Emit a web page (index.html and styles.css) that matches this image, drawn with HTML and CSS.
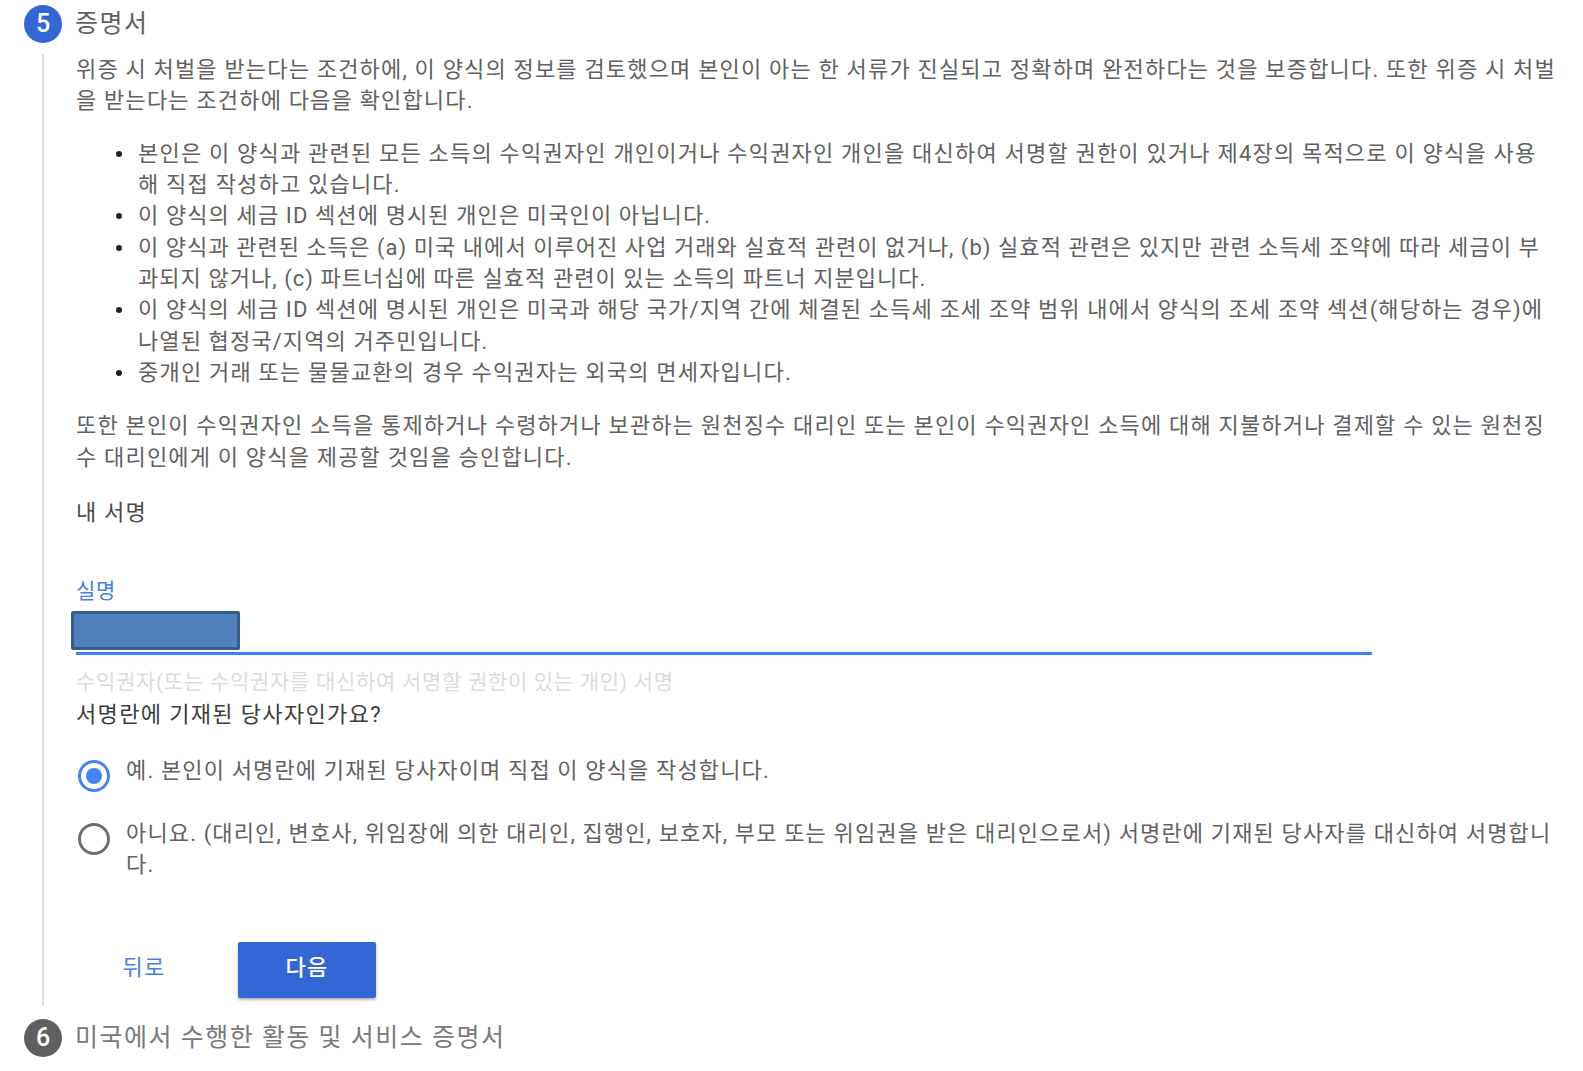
FILE: index.html
```html
<!DOCTYPE html>
<html lang="ko">
<head>
<meta charset="utf-8">
<title>증명서</title>
<link rel="stylesheet" href="styles.css">
</head>
<body>
<main class="stepper">
  <header class="step-head">
    <span class="badge badge-active">5</span>
    <h2 class="step-title">증명서</h2>
  </header>
  <section class="step-body">
    <p class="para para-first">위증 시 처벌을 받는다는 조건하에, 이 양식의 정보를 검토했으며 본인이 아는 한 서류가 진실되고 정확하며 완전하다는 것을 보증합니다. 또한 위증 시 처벌을 받는다는 조건하에 다음을 확인합니다.</p>
    <ul class="list">
      <li class="item-wide">본인은 이 양식과 관련된 모든 소득의 수익권자인 개인이거나 수익권자인 개인을 대신하여 서명할 권한이 있거나 제4장의 목적으로 이 양식을 사용해 직접 작성하고 있습니다.</li>
      <li class="item-mid">이 양식의 세금 ID 섹션에 명시된 개인은 미국인이 아닙니다.</li>
      <li class="item-tight">이 양식과 관련된 소득은 (a) 미국 내에서 이루어진 사업 거래와 실효적 관련이 없거나, (b) 실효적 관련은 있지만 관련 소득세 조약에 따라 세금이 부과되지 않거나, (c) 파트너십에 따른 실효적 관련이 있는 소득의 파트너 지분입니다.</li>
      <li class="item-mid">이 양식의 세금 ID 섹션에 명시된 개인은 미국과 해당 국가/지역 간에 체결된 소득세 조세 조약 범위 내에서 양식의 조세 조약 섹션(해당하는 경우)에 나열된 협정국/지역의 거주민입니다.</li>
      <li class="item-wide">중개인 거래 또는 물물교환의 경우 수익권자는 외국의 면세자입니다.</li>
    </ul>
    <p class="para">또한 본인이 수익권자인 소득을 통제하거나 수령하거나 보관하는 원천징수 대리인 또는 본인이 수익권자인 소득에 대해 지불하거나 결제할 수 있는 원천징수 대리인에게 이 양식을 제공할 것임을 승인합니다.</p>
    <p class="para sign-label">내 서명</p>
    <div class="field">
      <label class="field-label">실명</label>
      <div class="field-input"><span class="redact"></span></div>
      <p class="field-hint">수익권자(또는 수익권자를 대신하여 서명할 권한이 있는 개인) 서명</p>
    </div>
    <p class="para question">서명란에 기재된 당사자인가요?</p>
    <div class="radio-row radio-first">
      <span class="radio radio-on"><span class="radio-dot"></span></span>
      <span class="radio-text">예. 본인이 서명란에 기재된 당사자이며 직접 이 양식을 작성합니다.</span>
    </div>
    <div class="radio-row">
      <span class="radio"></span>
      <span class="radio-text">아니요. (대리인, 변호사, 위임장에 의한 대리인, 집행인, 보호자, 부모 또는 위임권을 받은 대리인으로서) 서명란에 기재된 당사자를 대신하여 서명합니다.</span>
    </div>
    <div class="actions">
      <button class="btn-text" type="button">뒤로</button>
      <button class="btn-primary" type="button">다음</button>
    </div>
  </section>
  <header class="step-head step-next">
    <span class="badge badge-idle">6</span>
    <h2 class="step-title step-title-idle">미국에서 수행한 활동 및 서비스 증명서</h2>
  </header>
</main>
</body>
</html>
```
FILE: styles.css
```css
* { box-sizing: border-box; }
html, body { margin: 0; padding: 0; background: #fff; }
body {
  font-family: Roboto, "Noto Sans CJK KR", sans-serif;
  font-size: 22px;
  letter-spacing: 1.18px;
  line-height: 31.35px;
  color: #616161;
  height: 1071px;
  overflow: hidden;
  word-break: break-all;
}
.stepper { padding: 5px 26px 0 24px; }
.step-head { display: flex; align-items: center; gap: 13px; height: 38px; }
.badge {
  width: 38px; height: 38px; border-radius: 50%;
  display: flex; align-items: center; justify-content: center;
  color: #fff; font-size: 25px; font-weight: 500; flex: none; letter-spacing: 0;
}
.badge-active { background: #3367d6; }
.badge-idle { background: #5f5f5f; }
.step-title { margin: 0; font-size: 25px; font-weight: 400; line-height: 36px; letter-spacing: 1.5px; color: #616161; }
.step-title-idle { color: #7a7a7a; }
.step-body {
  margin: 12px 0 0 18px;
  padding: 0 0 0 32px;
  border-left: 2px solid #e0e0e0;
  height: 952px;
}
.para { margin: 0; }
.para-first { margin-top: -1px; }
.list { margin: 21px 0 22px; padding: 0 3px 0 62px; list-style: none; }
.list li { position: relative; }
.list li::before {
  content: ""; position: absolute; left: -22px; top: 13px;
  width: 6px; height: 6px; border-radius: 50%; background: #222;
}
.list .item-wide { letter-spacing: 1.2px; }
.list .item-mid { letter-spacing: 1.11px; }
.list .item-tight { letter-spacing: 1.05px; }
.sign-label { margin-top: 24px; color: #4a4a4a; }
.field { margin-top: 48px; }
.field-label { display: block; color: #4a7fe8; font-size: 21px; line-height: 30px; letter-spacing: .6px; }
.field-input { position: relative; width: 1296px; height: 49px; border-bottom: 3px solid #3d80f5; }
.redact {
  position: absolute; left: -5px; top: 5px; width: 169px; height: 39px;
  background: #4f81bd; border: 3px solid #385d8a; border-radius: 2px;
}
.field-hint { margin: 12px 0 0; font-size: 21px; line-height: 31px; letter-spacing: .7px; color: #dcdcdc; }
.question { margin-top: 1px; color: #3c3c3c; letter-spacing: 1.35px; }
.radio-row { display: flex; gap: 16px; padding-left: 2px; }
.radio-first { margin-top: 24px; min-height: 63px; }
.radio {
  flex: none; width: 32px; height: 32px; margin-top: 5px; border-radius: 50%;
  border: 3px solid #6e6e6e;
  display: flex; align-items: center; justify-content: center;
}
.radio-on { border-color: #4285f4; }
.radio-dot { width: 16px; height: 16px; border-radius: 50%; background: #4285f4; }
.radio-text { flex: 1; letter-spacing: 1.14px; }
.actions { display: flex; align-items: center; margin: 61px 0 0 -1px; }
.btn-text {
  border: 0; background: none; padding: 0 0 4px; font: inherit; letter-spacing: inherit; color: #4a7fe8;
  width: 138px; text-align: center; margin-right: 25px;
}
.btn-primary {
  width: 138px; height: 56px; border: 0; border-radius: 2px; padding: 0 0 4px;
  font: inherit; letter-spacing: inherit; font-weight: 500; color: #fff; background: #3367d6;
  box-shadow: 0 2px 3px rgba(0,0,0,.3);
}
.step-next { margin-top: 13px; }
```
